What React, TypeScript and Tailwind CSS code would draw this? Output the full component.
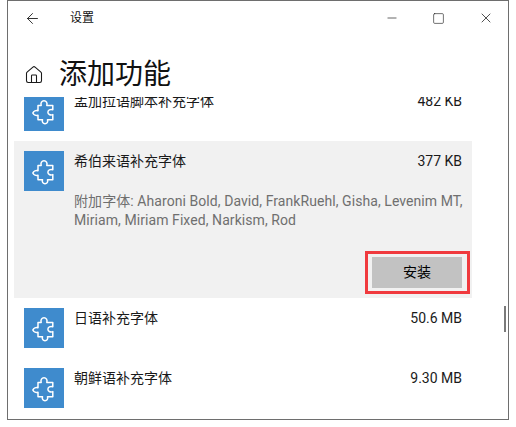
import { ArrowLeft, Home, Minus, Square, X } from "lucide-react";

const font = { fontFamily: 'Roboto, "Noto Sans CJK SC", sans-serif' };

function PuzzleIcon() {
    return (
        <div className="w-10 h-10 shrink-0 bg-[#3f8bcd] flex items-center justify-center">
            <svg width="40" height="40" viewBox="0 0 40 40" fill="none" stroke="white" strokeWidth="1.5" strokeLinejoin="round">
                <path d="M14 14.500h3.200c-.8-2.600.6-4.700 2.800-4.700s3.600 2.100 2.800 4.700h6v4.300c-2.600-.9-4.900.4-4.900 2.400s2.300 3.300 4.900 2.400v5.100h-5.300c.7 2.400-.6 4.100-2.500 4.100s-3.200-1.700-2.500-4.100h-4.500v-4.500c-2 .8-4.300-.2-5.200-2.200.9-2 3.200-3 5.200-2.200z" />
            </svg>
        </div>
    );
}

function Row({ name, size }: { name: string; size: string }) {
    return (
        <div className="flex mx-[6px] w-[458px] px-[10px] py-[10px] h-[60px]">
            <PuzzleIcon />
            <div className="ml-[10px] flex-1 text-[14px] leading-5 text-[#1a1a1a]">{name}</div>
            <div className="text-[14px] leading-5 text-[#1a1a1a]">{size}</div>
        </div>
    );
}

export default function App() {
    return (
        <div className="w-[516px] h-[427px] bg-white overflow-hidden" style={font}>
            <div className="relative ml-[7px] w-[502px] h-[420px] border border-[#6e6e6e] bg-white overflow-hidden">
                <div className="flex items-center h-[34px] pl-[16px] text-[#111]">
                    <ArrowLeft size={17} strokeWidth={1.2} />
                    <span className="ml-[29px] text-[12px]">设置</span>
                    <div className="ml-auto flex items-center">
                        <Minus size={14} strokeWidth={1.1} className="mr-[33px]" />
                        <Square size={13} strokeWidth={1.1} className="mr-[33px]" />
                        <X size={16} strokeWidth={1.1} className="mr-[14px]" />
                    </div>
                </div>
                <div className="flex items-center h-[62px] pl-[16px] pt-[17px]">
                    <Home size={20} strokeWidth={1.3} className="text-[#1a1a1a]" />
                    <h1 className="ml-[15px] text-[28px] leading-10 font-normal text-[#111]">添加功能</h1>
                </div>
                <div className="h-[323px] overflow-hidden">
                    <div className="-mt-[16px]">
                        <Row name="孟加拉语脚本补充字体" size="482 KB" />
                        <div className="mx-[6px] w-[458px] h-[157px] bg-[#f1f1f1] px-[10px] py-[10px] flex flex-col">
                            <div className="flex">
                                <PuzzleIcon />
                                <div className="ml-[10px] flex-1 text-[14px] leading-5 text-[#1a1a1a]">希伯来语补充字体</div>
                                <div className="text-[14px] leading-5 text-[#1a1a1a]">377 KB</div>
                            </div>
                            <p className="ml-[50px] -mr-[6px] mt-px text-[14px] leading-[19px] tracking-[0.07px] text-[#6f6f6f] whitespace-nowrap">
                                附加字体: Aharoni Bold, David, FrankRuehl, Gisha, Levenim MT,
                                <br />
                                Miriam, Miriam Fixed, Narkism, Rod
                            </p>
                            <div className="flex justify-end mt-auto">
                                <button className="relative w-[90px] h-[31px] bg-[#c2c2c2] text-[14px] text-black">
                                    安装
                                    <span className="absolute -left-[7px] -right-[8px] -top-[6px] -bottom-[6px] border-[3px] border-[#f03a3e]" />
                                </button>
                            </div>
                        </div>
                        <Row name="日语补充字体" size="50.6 MB" />
                        <Row name="朝鲜语补充字体" size="9.30 MB" />
                    </div>
                </div>
                <div className="absolute left-[496px] top-[305px] w-[2px] h-[26px] bg-[#7a7a7a]" />
            </div>
        </div>
    );
}
